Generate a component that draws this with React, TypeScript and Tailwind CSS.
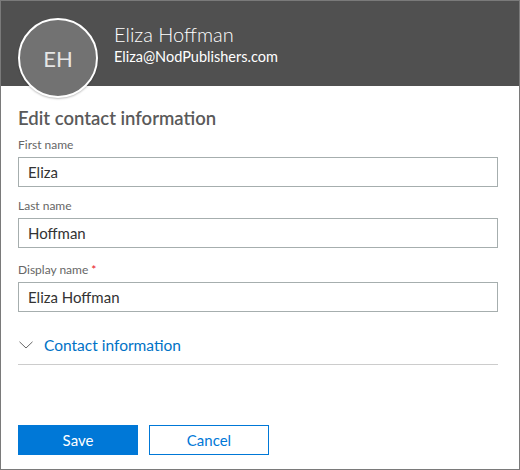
import React, { useState } from 'react';

const font = { fontFamily: 'Lato, "Open Sans", sans-serif' };

type FieldProps = {
  label: string;
  value: string;
  required?: boolean;
  className?: string;
  onChange: (v: string) => void;
};

// Single labelled text box
const Field = ({ label, value, required, className, onChange }: FieldProps) => (
  <div className={className}>
    <label className="block text-[12px] leading-[16px] text-[#666666]">
      {label}
      {required && <span className="text-[#e81123]"> *</span>}
    </label>
    <input
      type="text"
      value={value}
      onChange={(e) => onChange(e.target.value)}
      className="mt-1 block w-full h-[30px] border border-[#a6aeae] px-[9px] text-[15px] text-[#333333] outline-none"
    />
  </div>
);

const App = () => {
  const [form, setForm] = useState({
    firstName: 'Eliza',
    lastName: 'Hoffman',
    displayName: 'Eliza Hoffman',
  });
  const [open, setOpen] = useState(false);

  return (
    <div style={font} className="w-[520px] h-[470px] border border-[#7a7a7a] bg-white flex flex-col overflow-hidden">
      {/* Header */}
      <div className="h-[85px] shrink-0 bg-[#505050] flex items-start pl-[17px] pt-[17px]">
        <div className="relative z-10 w-20 h-20 shrink-0 rounded-full border-2 border-white bg-[#727272] flex items-center justify-center text-[22px] text-[#e6e6e6] shadow-[0_1px_2px_rgba(0,0,0,0.25)]">
          EH
        </div>
        <div className="ml-4 mt-[3px] text-white">
          <div className="text-[20px] leading-[26px] font-light">Eliza Hoffman</div>
          <div className="text-[14.5px] leading-[20px]">Eliza@NodPublishers.com</div>
        </div>
      </div>

      {/* Form */}
      <div className="flex-1 flex flex-col pl-[17px] pr-[21px] pt-5 pb-[14px]">
        <h2 className="text-[18.5px] leading-[24px] font-semibold text-[#5a5a5a]">Edit contact information</h2>

        <Field
          className="mt-[7px]"
          label="First name"
          value={form.firstName}
          onChange={(v) => setForm((f) => ({ ...f, firstName: v }))}
        />
        <Field
          className="mt-[11px]"
          label="Last name"
          value={form.lastName}
          onChange={(v) => setForm((f) => ({ ...f, lastName: v }))}
        />
        <Field
          className="mt-[14px]"
          label="Display name"
          required
          value={form.displayName}
          onChange={(v) => setForm((f) => ({ ...f, displayName: v }))}
        />

        <button
          type="button"
          onClick={() => setOpen(!open)}
          className="mt-[22px] h-[22px] flex items-center text-left"
        >
          <svg width="14" height="8" viewBox="0 0 14 8" className="ml-px" fill="none">
            <path d="M0.5 0.8 L7 7 L13.5 0.8" stroke="#666666" strokeWidth="1" />
          </svg>
          <span className="ml-[11px] text-[15.5px] leading-[22px] text-[#0072c6]">Contact information</span>
        </button>
        <div className="mt-2 h-px bg-[#cccccc]" />

        <div className="mt-auto flex gap-[11px]">
          <button type="button" className="w-[120px] h-[30px] bg-[#0078d7] text-white text-[15px]">
            Save
          </button>
          <button type="button" className="w-[120px] h-[30px] border border-[#0078d7] text-[#0078d7] text-[15px]">
            Cancel
          </button>
        </div>
      </div>
    </div>
  );
};

export default App;
